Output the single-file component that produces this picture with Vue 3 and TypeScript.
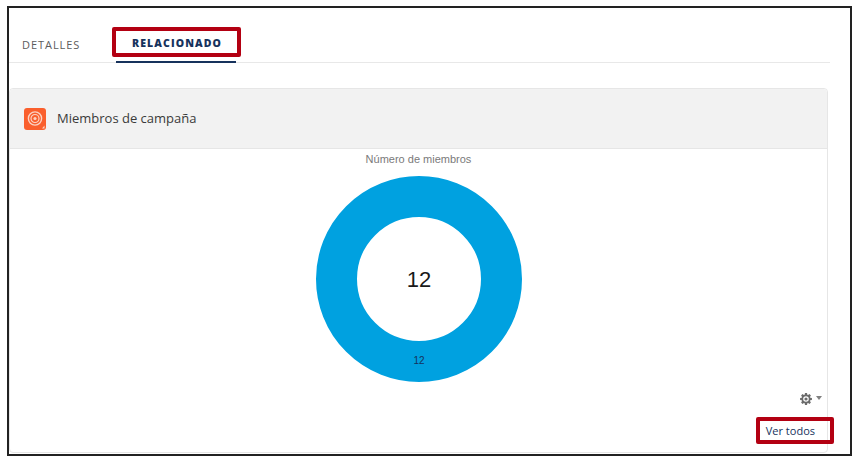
<template>
  <div class="frame">
    <div class="tabs">
      <div class="tab">DETALLES</div>
      <div class="tab active">
        RELACIONADO
        <span class="mark mark-tab"></span>
      </div>
    </div>

    <section class="card">
      <header class="card-header">
        <svg class="card-icon" viewBox="0 0 22 22" aria-hidden="true">
          <rect width="22" height="22" rx="3" fill="#fa5f2d" />
          <circle cx="11" cy="10.5" r="6.6" fill="none" stroke="#fbd3c4" stroke-width="1.4" />
          <circle cx="11" cy="10.5" r="4" fill="none" stroke="#fbd3c4" stroke-width="1.2" />
          <circle cx="11" cy="10.5" r="1.6" fill="#fbd3c4" />
          <path d="M18 20.500l2.500-3v3z" fill="#fbd3c4" />
        </svg>
        <h2 class="card-title">Miembros de campaña</h2>
      </header>

      <div class="card-body">
        <div class="chart-title">{{ chartTitle }}</div>
        <svg class="donut" viewBox="0 0 206 206" role="img">
          <circle cx="103" cy="103" r="82.5" fill="none" stroke="#00a1e0" stroke-width="41" />
          <text x="103" y="111" text-anchor="middle" class="donut-total">{{ total }}</text>
          <text x="103" y="188" text-anchor="middle" class="donut-label">{{ total }}</text>
        </svg>
        <div class="chart-tools">
          <svg class="gear" viewBox="0 0 24 24" aria-hidden="true">
            <path fill-rule="evenodd" :d="gearPath" />
          </svg>
          <span class="caret"></span>
        </div>
      </div>

      <footer class="card-footer">
        <a class="view-all">
          Ver todos
          <span class="mark mark-link"></span>
        </a>
      </footer>
    </section>
  </div>
</template>

<script setup lang="ts">
import { computed } from 'vue'

const chartTitle = 'Número de miembros'
const total = 12

// 8 teeth, with a ring cut out of the middle
const gearPath = computed(() => {
  const teeth = 8
  const points: string[] = []
  for (let i = 0; i < teeth; i++) {
    const a = (i / teeth) * Math.PI * 2
    const spread = [
      [-0.3, 9],
      [-0.17, 12],
      [0.17, 12],
      [0.3, 9],
    ]
    for (const [da, r] of spread) {
      const x = 12 + Math.cos(a + da) * r
      const y = 12 + Math.sin(a + da) * r
      points.push(`${x.toFixed(2)} ${y.toFixed(2)}`)
    }
  }
  const ring = (r: number) => `M${12 - r} 12a${r} ${r} 0 1 0 ${r * 2} 0a${r} ${r} 0 1 0 ${-r * 2} 0z`
  return `M${points.join('L')}z${ring(5.6)}${ring(3.2)}`
})
</script>

<style>
html,
body {
  margin: 0;
  background: #fff;
}
</style>

<style scoped>
.frame {
  box-sizing: border-box;
  width: 845px;
  height: 450px;
  margin: 6px 0 0 7px;
  padding: 0 22px 0 0;
  border: 2px solid #222;
  background: #fff;
  font-family: "Open Sans", Lato, sans-serif;
  overflow: hidden;
}

.tabs {
  display: flex;
  height: 54px;
  margin-right: -2px;
  border-bottom: 1px solid #e8e8e8;
}

.tab {
  position: relative;
  display: flex;
  align-items: center;
  padding-top: 17px;
  box-sizing: border-box;
  height: 55px;
  font-size: 11px;
  letter-spacing: 0.95px;
  color: #5c5c5c;
}

.tab:first-child {
  width: 107px;
  padding-left: 13px;
}

.tab.active {
  width: 120px;
  justify-content: center;
  padding-left: 2px;
  font-size: 10.5px;
  font-weight: 800;
  letter-spacing: 1.1px;
  color: #16325c;
  border-bottom: 2px solid #16325c;
}

.mark {
  position: absolute;
  box-sizing: border-box;
  border: 4px solid #b30012;
  border-radius: 2px;
}

.mark-tab {
  left: -4px;
  top: 19px;
  width: 129px;
  height: 30px;
}

.mark-link {
  left: -10px;
  top: -7px;
  width: 78px;
  height: 27px;
}

.card {
  display: flex;
  flex-direction: column;
  margin-top: 25px;
  height: 365px;
  box-sizing: border-box;
  border: 1px solid #e6e6e6;
  border-radius: 4px;
}

.card-header {
  display: flex;
  align-items: center;
  gap: 11px;
  height: 60px;
  flex: none;
  padding-left: 14px;
  box-sizing: border-box;
  background: #f2f2f2;
  border-bottom: 1px solid #e6e6e6;
  border-radius: 4px 4px 0 0;
}

.card-icon {
  width: 22px;
  height: 22px;
}

.card-title {
  margin: 0 0 1px;
  font-size: 13px;
  font-weight: 400;
  color: #3a3a3a;
}

.card-body {
  flex: 1;
  display: flex;
  flex-direction: column;
  align-items: center;
  padding-top: 4px;
}

.chart-title {
  font-family: "Liberation Sans", Arial, sans-serif;
  font-size: 11px;
  line-height: 13px;
  color: #7a7a7a;
}

.donut {
  width: 206px;
  height: 206px;
  margin-top: 10px;
}

.donut-total {
  font-family: "Liberation Sans", Arial, sans-serif;
  font-size: 22px;
  fill: #1a1a1a;
}

.donut-label {
  font-family: "Liberation Sans", Arial, sans-serif;
  font-size: 10px;
  fill: #16325c;
}

.chart-tools {
  align-self: flex-end;
  display: flex;
  align-items: center;
  gap: 4px;
  margin: 11px 5px 0 0;
}

.gear {
  width: 12px;
  height: 12px;
  fill: #6b6b6b;
}

.caret {
  width: 0;
  height: 0;
  border-left: 3px solid transparent;
  border-right: 3px solid transparent;
  border-top: 4px solid #808080;
  margin-bottom: 2px;
}

.card-footer {
  display: flex;
  justify-content: flex-end;
  padding: 0 12px 14px 0;
}

.view-all {
  position: relative;
  font-size: 11px;
  line-height: 14px;
  color: #16325c;
}
</style>
